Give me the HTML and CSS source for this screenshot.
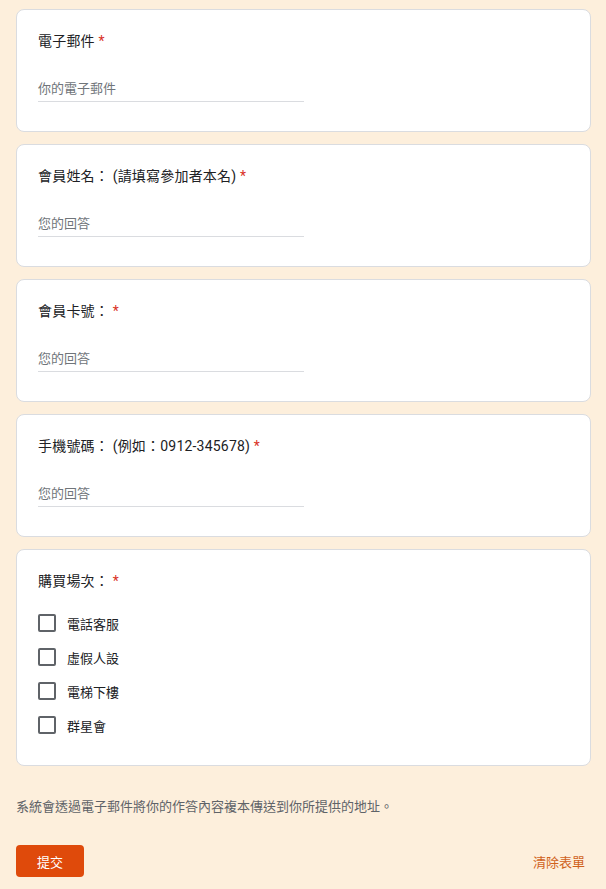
FILE: index.html
```html
<!DOCTYPE html>
<html lang="zh-Hant">
<head>
<meta charset="utf-8">
<title>表單</title>
<link rel="stylesheet" href="styles.css">
</head>
<body>
<main class="form">
  <section class="card">
    <div class="title">電子郵件 <span class="req">*</span></div>
    <div class="input">你的電子郵件</div>
  </section>
  <section class="card">
    <div class="title">會員姓名： (請填寫參加者本名) <span class="req">*</span></div>
    <div class="input">您的回答</div>
  </section>
  <section class="card">
    <div class="title">會員卡號： <span class="req">*</span></div>
    <div class="input">您的回答</div>
  </section>
  <section class="card">
    <div class="title">手機號碼： (例如：0912-345678) <span class="req">*</span></div>
    <div class="input">您的回答</div>
  </section>
  <section class="card card-check">
    <div class="title">購買場次： <span class="req">*</span></div>
    <ul class="options">
      <li class="option"><span class="box"></span><span>電話客服</span></li>
      <li class="option"><span class="box"></span><span>虛假人設</span></li>
      <li class="option"><span class="box"></span><span>電梯下樓</span></li>
      <li class="option"><span class="box"></span><span>群星會</span></li>
    </ul>
  </section>
  <p class="note">系統會透過電子郵件將你的作答內容複本傳送到你所提供的地址。</p>
  <div class="actions">
    <button class="submit" type="button">提交</button>
    <span class="clear">清除表單</span>
  </div>
</main>
</body>
</html>
```
FILE: styles.css
```css
html, body {
  margin: 0;
  padding: 0;
  background: #fdefdc;
}
body {
  font-family: Roboto, "Noto Sans CJK TC", "Liberation Sans", sans-serif;
  color: #202124;
}
.form {
  padding: 9px 15px 0 16px;
  display: flex;
  flex-direction: column;
  gap: 12px;
}
.card {
  background: #fff;
  border: 1px solid #dadce0;
  border-radius: 8px;
  padding: 22px 21px 29px 21px;
}
.title {
  font-size: 14px;
  line-height: 18px;
  height: 18px;
  letter-spacing: 0.2px;
}
.req {
  color: #d93025;
}
.input {
  width: 266px;
  margin-top: 27px;
  font-size: 13px;
  line-height: 24px;
  height: 24px;
  color: #70757a;
  border-bottom: 1px solid #dadce0;
}
.card-check {
  padding-bottom: 30px;
}
.options {
  list-style: none;
  margin: 23px 0 0 0;
  padding: 0;
  display: flex;
  flex-direction: column;
  gap: 14px;
}
.option {
  display: flex;
  align-items: center;
  gap: 11px;
  height: 20px;
  font-size: 13px;
}
.box {
  width: 14px;
  height: 14px;
  border: 2px solid #5f6368;
  border-radius: 2px;
  flex: none;
}
.note {
  margin: 19px 0 0 0;
  font-size: 13px;
  line-height: 20px;
  color: #5f6368;
}
.actions {
  margin-top: 16px;
  display: flex;
  justify-content: space-between;
  align-items: center;
  padding-right: 6px;
}
.submit {
  width: 68px;
  height: 32px;
  border: none;
  border-radius: 4px;
  background: #df4a0b;
  color: #fff;
  font-family: inherit;
  font-size: 13px;
  padding: 0;
}
.clear {
  font-size: 13px;
  color: #d0621b;
}
```
